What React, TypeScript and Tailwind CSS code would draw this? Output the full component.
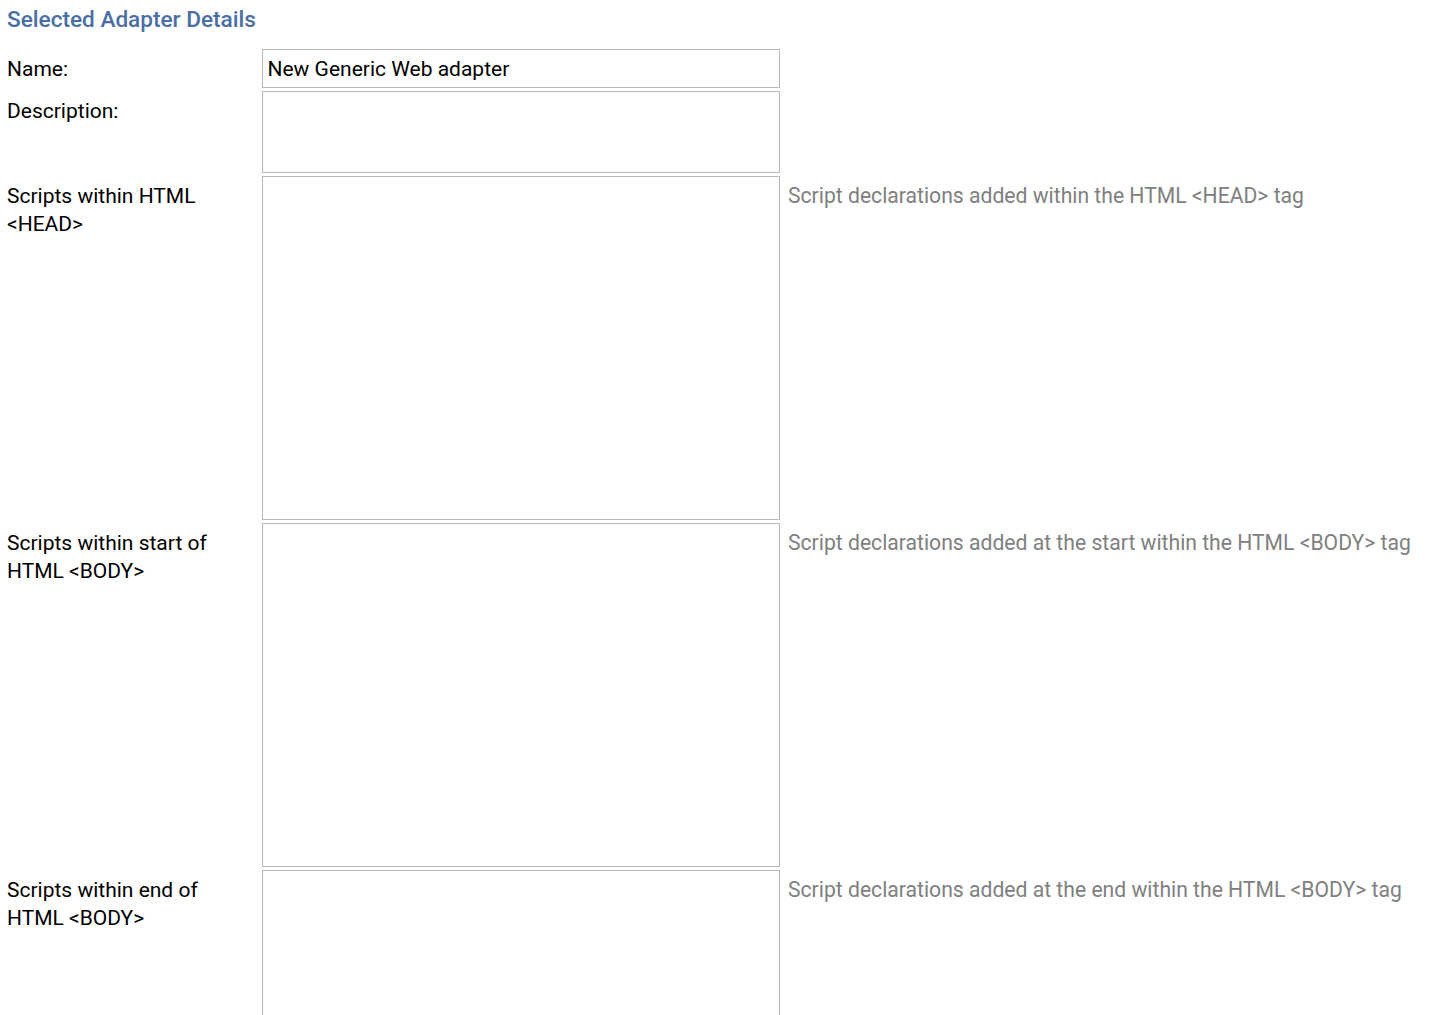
import React from "react";

const font = { fontFamily: "Roboto, 'Liberation Sans', sans-serif" };

function Row({ label, height, help, value }: { label: React.ReactNode; height: number; help?: string; value?: string }) {
  return (
    <div className="flex items-start">
      <div className="w-[262px] shrink-0 pl-[7px] pt-[6px] text-[21px] leading-[28px] text-black">{label}</div>
      <div
        className="w-[518px] shrink-0 border-[1.5px] border-[#b8b8bc] bg-white"
        style={{ height }}
      >
        {value && <div className="pl-[4.5px] pt-[4.5px] text-[21px] leading-[28px] text-black">{value}</div>}
      </div>
      {help && <div className="pl-[8px] pt-[6px] text-[21.15px] leading-[28px] text-[#808080] whitespace-nowrap">{help}</div>}
    </div>
  );
}

export default function App() {
  return (
    <div className="w-[1432px] h-[1015px] overflow-hidden bg-white" style={font}>
      <div className="pl-[7px] pt-[5px] h-[49px] text-[22.6px] leading-[30px] font-medium text-[#4a6fa4]">Selected Adapter Details</div>
      <div className="flex flex-col gap-[3px]">
        <Row label="Name:" height={39} value="New Generic Web adapter" />
        <Row label="Description:" height={82} />
        <Row label={<>Scripts within HTML<br />&lt;HEAD&gt;</>} height={344} help="Script declarations added within the HTML <HEAD> tag" />
        <Row label={<>Scripts within start of<br />HTML &lt;BODY&gt;</>} height={344} help="Script declarations added at the start within the HTML <BODY> tag" />
        <Row label={<>Scripts within end of<br />HTML &lt;BODY&gt;</>} height={344} help="Script declarations added at the end within the HTML <BODY> tag" />
      </div>
    </div>
  );
}
